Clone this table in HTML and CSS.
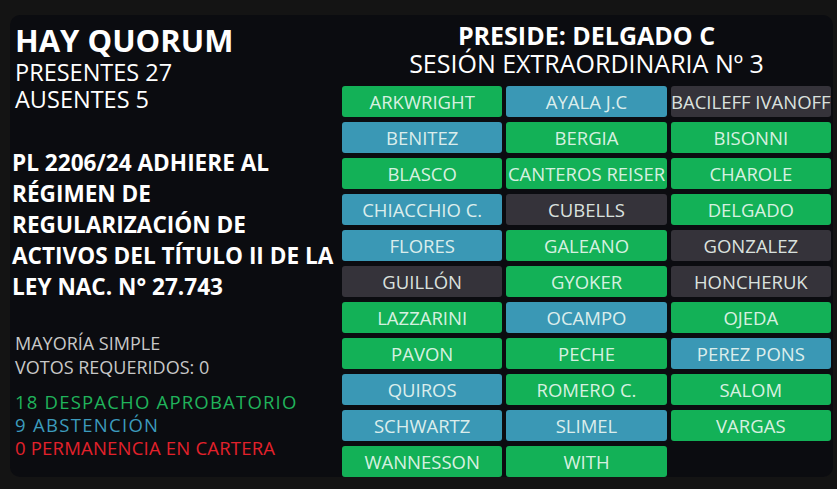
FILE: index.html
```html
<!DOCTYPE html>
<html lang="es">
<head>
<meta charset="utf-8">
<title>Votación</title>
<link rel="stylesheet" href="styles.css">
</head>
<body>
<main class="board">
  <section class="info">
    <h1 class="quorum">HAY QUORUM</h1>
    <p class="count">PRESENTES 27</p>
    <p class="count">AUSENTES 5</p>
    <h2 class="topic">PL 2206/24 ADHIERE AL RÉGIMEN DE REGULARIZACIÓN DE ACTIVOS DEL TÍTULO II DE LA LEY NAC. N° 27.743</h2>
    <p class="rule">MAYORÍA SIMPLE</p>
    <p class="rule">VOTOS REQUERIDOS: 0</p>
    <div class="totals">
      <p class="t-yes">18 DESPACHO APROBATORIO</p>
      <p class="t-abs">9 ABSTENCIÓN</p>
      <p class="t-no">0 PERMANENCIA EN CARTERA</p>
    </div>
  </section>
  <section class="chamber">
    <h2 class="preside">PRESIDE: DELGADO C</h2>
    <p class="session">SESIÓN EXTRAORDINARIA Nº 3</p>
    <div class="grid">
      <div class="seat yes">ARKWRIGHT</div>
      <div class="seat abs">AYALA J.C</div>
      <div class="seat off">BACILEFF IVANOFF</div>
      <div class="seat abs">BENITEZ</div>
      <div class="seat yes">BERGIA</div>
      <div class="seat yes">BISONNI</div>
      <div class="seat yes">BLASCO</div>
      <div class="seat yes">CANTEROS REISER</div>
      <div class="seat yes">CHAROLE</div>
      <div class="seat abs">CHIACCHIO C.</div>
      <div class="seat off">CUBELLS</div>
      <div class="seat yes">DELGADO</div>
      <div class="seat abs">FLORES</div>
      <div class="seat yes">GALEANO</div>
      <div class="seat off">GONZALEZ</div>
      <div class="seat off">GUILLÓN</div>
      <div class="seat yes">GYOKER</div>
      <div class="seat off">HONCHERUK</div>
      <div class="seat yes">LAZZARINI</div>
      <div class="seat abs">OCAMPO</div>
      <div class="seat yes">OJEDA</div>
      <div class="seat yes">PAVON</div>
      <div class="seat yes">PECHE</div>
      <div class="seat abs">PEREZ PONS</div>
      <div class="seat abs">QUIROS</div>
      <div class="seat yes">ROMERO C.</div>
      <div class="seat yes">SALOM</div>
      <div class="seat abs">SCHWARTZ</div>
      <div class="seat abs">SLIMEL</div>
      <div class="seat yes">VARGAS</div>
      <div class="seat yes">WANNESSON</div>
      <div class="seat yes">WITH</div>
    </div>
  </section>
</main>
</body>
</html>
```

FILE: styles.css
```css
* { box-sizing: border-box; margin: 0; padding: 0; }

html, body {
  width: 837px;
  height: 489px;
  overflow: hidden;
}

body {
  background: #141414;
  font-family: "Open Sans", "Noto Sans", sans-serif;
  color: #ffffff;
}

.board {
  margin: 15px 4px 0 10px;
  height: 462px;
  background: #0b0c10;
  border-radius: 10px;
  display: grid;
  grid-template-columns: 330px 1fr;
  overflow: hidden;
}

.info {
  padding: 7px 0 0 5px;
}

.quorum {
  font-size: 31px;
  font-weight: 700;
  line-height: 37px;
}

.count {
  font-size: 23.5px;
  line-height: 27px;
}

.topic {
  margin-top: 34px;
  margin-left: -3px;
  font-size: 22.6px;
  font-weight: 700;
  line-height: 31px;
}

.rule {
  font-size: 18px;
  line-height: 24px;
  color: #c8c8c8;
}

.topic + .rule { margin-top: 29px; }

.totals {
  margin-top: 11px;
  font-size: 18.5px;
  line-height: 23px;
}

.t-yes { color: #20b35b; letter-spacing: 1.2px; }
.t-abs { color: #3c9bbd; letter-spacing: 1.3px; }
.t-no  { color: #e3212b; letter-spacing: 0.2px; }

.chamber {
  padding: 6px 2px 0 2px;
  text-align: center;
}

.preside {
  font-size: 25px;
  font-weight: 700;
  line-height: 28px;
}

.session {
  font-size: 25px;
  line-height: 28px;
}

.grid {
  margin-top: 9px;
  display: grid;
  grid-template-columns: repeat(3, 1fr);
  grid-auto-rows: 31px;
  column-gap: 4px;
  row-gap: 5px;
}

.seat {
  border-radius: 3px;
  font-size: 18.5px;
  line-height: 31px;
  color: rgba(240, 250, 244, 0.9);
  white-space: nowrap;
  overflow: hidden;
}

.yes { background: #13b157; }
.abs { background: #3a98b5; }
.off { background: #35333a; }
```
